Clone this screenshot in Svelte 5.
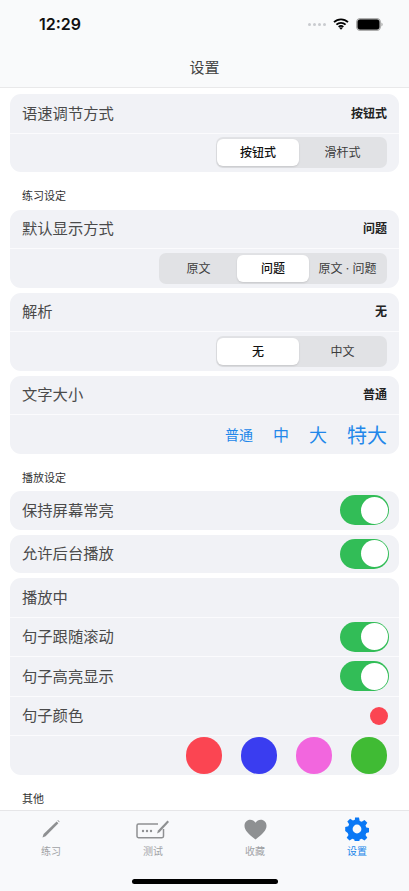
<script>
    const tabs = [
        { key: 'pen', label: '练习' },
        { key: 'test', label: '测试' },
        { key: 'heart', label: '收藏' },
        { key: 'gear', label: '设置', active: true }
    ];
    const sizes = [
        { label: '普通', size: 14 },
        { label: '中', size: 16 },
        { label: '大', size: 18 },
        { label: '特大', size: 20 }
    ];
    const colors = ['#fb4552', '#3a3df0', '#f266de', '#40bb34'];
</script>

{#snippet toggle()}
    <span class="toggle"><span class="knob"></span></span>
{/snippet}

<div class="phone">
    <header>
        <div class="status">
            <span class="time">12:29</span>
            <span class="status-right">
                <span class="signal"><i></i><i></i><i></i><i></i></span>
                <svg width="16" height="12" viewBox="0 0 16 12">
                    <path d="M1 4.2a10 10 0 0 1 14 0M3.4 6.7a6.6 6.6 0 0 1 9.2 0M5.7 9a3.3 3.3 0 0 1 4.6 0" fill="none" stroke="#000" stroke-width="1.8"/>
                    <path d="M8 11.8 6.4 10a2.3 2.3 0 0 1 3.2 0z" fill="#000"/>
                </svg>
                <svg width="27" height="13" viewBox="0 0 27 13">
                    <rect x="0.8" y="0.8" width="23.4" height="11.4" rx="3.4" fill="#000" stroke="#aeaeae" stroke-width="1.600"/>
                    <path d="M25.3 4.500q1.400.5 1.400 2t-1.400 2z" fill="#aeaeae"/>
                </svg>
            </span>
        </div>
        <div class="nav">设置</div>
    </header>

    <main>
        <section class="card">
            <div class="row"><span class="label">语速调节方式</span><b>按钮式</b></div>
            <div class="row seg-row">
                <div class="seg two"><span class="on">按钮式</span><span>滑杆式</span></div>
            </div>
        </section>

        <h2>练习设定</h2>
        <section class="card">
            <div class="row"><span class="label">默认显示方式</span><b>问题</b></div>
            <div class="row seg-row">
                <div class="seg three"><span>原文</span><span class="on">问题</span><span>原文 · 问题</span></div>
            </div>
        </section>
        <section class="card">
            <div class="row"><span class="label">解析</span><b>无</b></div>
            <div class="row seg-row">
                <div class="seg two"><span class="on">无</span><span>中文</span></div>
            </div>
        </section>
        <section class="card">
            <div class="row"><span class="label">文字大小</span><b>普通</b></div>
            <div class="row sizes">
                {#each sizes as s}
                    <span style="font-size: {s.size}px">{s.label}</span>
                {/each}
            </div>
        </section>

        <h2>播放设定</h2>
        <section class="card">
            <div class="row"><span class="label">保持屏幕常亮</span>{@render toggle()}</div>
        </section>
        <section class="card">
            <div class="row"><span class="label">允许后台播放</span>{@render toggle()}</div>
        </section>
        <section class="card">
            <div class="row"><span class="label">播放中</span></div>
            <div class="row"><span class="label">句子跟随滚动</span>{@render toggle()}</div>
            <div class="row"><span class="label">句子高亮显示</span>{@render toggle()}</div>
            <div class="row"><span class="label">句子颜色</span><span class="dot" style="background: {colors[0]}"></span></div>
            <div class="row swatches">
                {#each colors as c}
                    <span class="swatch" style="background: {c}"></span>
                {/each}
            </div>
        </section>

        <h2>其他</h2>
    </main>

    <footer>
        <nav>
            {#each tabs as tab}
                <div class="tab" class:active={tab.active}>
                    <span class="icon">
                        {#if tab.key === 'pen'}
                            <svg width="20" height="20" viewBox="0 0 20 20">
                                <path d="M1.5 18.5 2.6 15 15.6 2.4 17.4 4.2 4.6 17.2z" fill="#8e9092"/>
                                <path d="M16.4 1.6 17 1l1.7 1.7-.6.6z" fill="#8e9092"/>
                            </svg>
                        {:else if tab.key === 'test'}
                            <svg width="34" height="20" viewBox="0 0 34 20">
                                <path d="M22 5H2.5Q1 5 1 6.5v10.800Q1 18.700 2.500 18.700h23.500q1.500 0 1.500-1.400V10" fill="none" stroke="#8e9092" stroke-width="1.500"/>
                                <circle cx="7" cy="12" r="1.200" fill="#8e9092"/>
                                <circle cx="11" cy="12" r="1.200" fill="#8e9092"/>
                                <circle cx="15" cy="12" r="1.200" fill="#8e9092"/>
                                <path d="M21 14.500 22 11.500 31.500 1.500 33 3 23.500 13.200z" fill="#8e9092"/>
                            </svg>
                        {:else if tab.key === 'heart'}
                            <svg width="23" height="21" viewBox="0 0 23 21">
                                <path d="M11.500 20.500C4.500 15 .5 11.300.5 6.700.5 3.200 3.100.8 6.200.8c2.200 0 4.100 1.100 5.300 3 1.200-1.900 3.100-3 5.300-3 3.100 0 5.700 2.400 5.700 5.900 0 4.600-4 8.300-11 13.800z" fill="#8e9092"/>
                            </svg>
                        {:else}
                            <svg width="24" height="24" viewBox="0 0 24 24">
                                <path fill-rule="evenodd" fill="#0a78f5" d="M10 .6h4l.7 3.300 2 .8 2.800-1.800 2.800 2.800-1.800 2.800.8 2 3.100.7v4l-3.100.7-.8 2 1.800 2.800-2.800 2.800-2.800-1.800-2 .8-.7 3.100h-4l-.7-3.100-2-.8-2.800 1.800-2.800-2.800 1.800-2.800-.8-2L.2 14v-4l3.100-.7.8-2-1.800-2.800 2.800-2.800 2.800 1.800 2-.8zM12 7.600a4.400 4.400 0 1 0 0 8.800 4.400 4.400 0 0 0 0-8.800z"/>
                            </svg>
                        {/if}
                    </span>
                    <span class="tab-label">{tab.label}</span>
                </div>
            {/each}
        </nav>
        <div class="home"></div>
    </footer>
</div>

<style>
    :global(body) {
        margin: 0;
        background: #fff;
    }

    .phone {
        width: 409px;
        height: 891px;
        display: flex;
        flex-direction: column;
        overflow: hidden;
        font-family: "Inter", "Noto Sans CJK SC", sans-serif;
        color: #444;
    }

    header {
        flex: none;
        height: 87px;
        background: #f9fafb;
        border-bottom: 1px solid #e9e9ea;
    }

    .status {
        height: 48px;
        display: flex;
        align-items: center;
        justify-content: space-between;
        padding: 0 26px 0 39px;
    }

    .time {
        font-size: 16px;
        font-weight: 600;
        color: #111;
    }

    .status-right {
        display: flex;
        align-items: center;
        gap: 7px;
    }

    .signal {
        display: flex;
        gap: 2px;
    }

    .signal i {
        width: 3px;
        height: 3px;
        border-radius: 50%;
        background: #c9cbcf;
    }

    .nav {
        height: 37px;
        padding-bottom: 2px;
        display: flex;
        align-items: center;
        justify-content: center;
        font-size: 15px;
        color: #444;
    }

    main {
        flex: 1;
        min-height: 0;
        padding: 6px 10px 0;
        display: flex;
        flex-direction: column;
        gap: 5px;
    }

    h2 {
        height: 31.500px;
        margin: 1px 0 -5px;
        padding: 3px 12px 0;
        box-sizing: border-box;
        font-size: 11px;
        font-weight: 400;
        color: #333;
        display: flex;
        align-items: center;
    }

    .card {
        flex: none;
        background: #f1f2f6;
        border-radius: 11px;
        overflow: hidden;
    }

    .row {
        height: 38.500px;
        box-sizing: border-box;
        display: flex;
        align-items: center;
        justify-content: space-between;
        padding: 0 12px;
        font-size: 15.300px;
        color: #4a4a4a;
    }

    .row + .row {
        height: 39.500px;
        border-top: 1px solid #fbfbfd;
    }

    .label {
        margin-bottom: 3px;
    }

    .row b {
        margin-bottom: 2px;
        font-size: 12px;
        font-weight: 600;
        color: #222;
    }

    .seg-row {
        justify-content: flex-end;
    }

    .seg {
        height: 31px;
        box-sizing: border-box;
        padding: 2px 1px;
        border-radius: 7px;
        background: #e1e2e5;
        display: grid;
        font-size: 12px;
        color: #3c3c3c;
    }

    .two {
        width: 171px;
        grid-template-columns: 82px 1fr;
    }

    .three {
        width: 228px;
        grid-template-columns: 77px 72px 1fr;
    }

    .seg span {
        display: flex;
        align-items: center;
        justify-content: center;
        padding-bottom: 2px;
        white-space: nowrap;
        border-radius: 6px;
    }

    .seg .on {
        background: #fff;
        color: #111;
        font-weight: 500;
        box-shadow: 0 1px 2px rgba(0, 0, 0, 0.12);
    }

    .sizes {
        justify-content: flex-end;
        gap: 20px;
        color: #2287ea;
    }

    .toggle {
        width: 49px;
        height: 30px;
        margin-right: -2px;
        box-sizing: border-box;
        padding: 1.500px;
        border-radius: 15px;
        background: #32bd57;
        display: flex;
        justify-content: flex-end;
    }

    .knob {
        width: 27px;
        height: 27px;
        border-radius: 50%;
        background: #fff;
    }

    .dot {
        width: 18px;
        height: 18px;
        border-radius: 50%;
        margin-right: -1px;
    }

    .swatches {
        justify-content: flex-end;
        gap: 18.500px;
    }

    .swatch {
        width: 36.500px;
        height: 36.500px;
        border-radius: 50%;
    }

    footer {
        flex: none;
        height: 81px;
        box-sizing: border-box;
        background: #f8f9fb;
        border-top: 1px solid #e6e6e8;
        display: flex;
        flex-direction: column;
        align-items: center;
    }

    nav {
        width: 100%;
        display: grid;
        grid-template-columns: repeat(4, 102px);
    }

    .tab {
        display: flex;
        flex-direction: column;
        align-items: center;
        padding-top: 6px;
    }

    .icon {
        height: 24px;
        display: flex;
        align-items: center;
        justify-content: center;
    }

    .tab-label {
        margin-top: 3px;
        font-size: 10px;
        line-height: 14px;
        color: #a0a2a5;
    }

    .active .tab-label {
        color: #2287ea;
    }

    .home {
        width: 146px;
        height: 5px;
        margin-top: 21px;
        border-radius: 3px;
        background: #000;
    }
</style>
